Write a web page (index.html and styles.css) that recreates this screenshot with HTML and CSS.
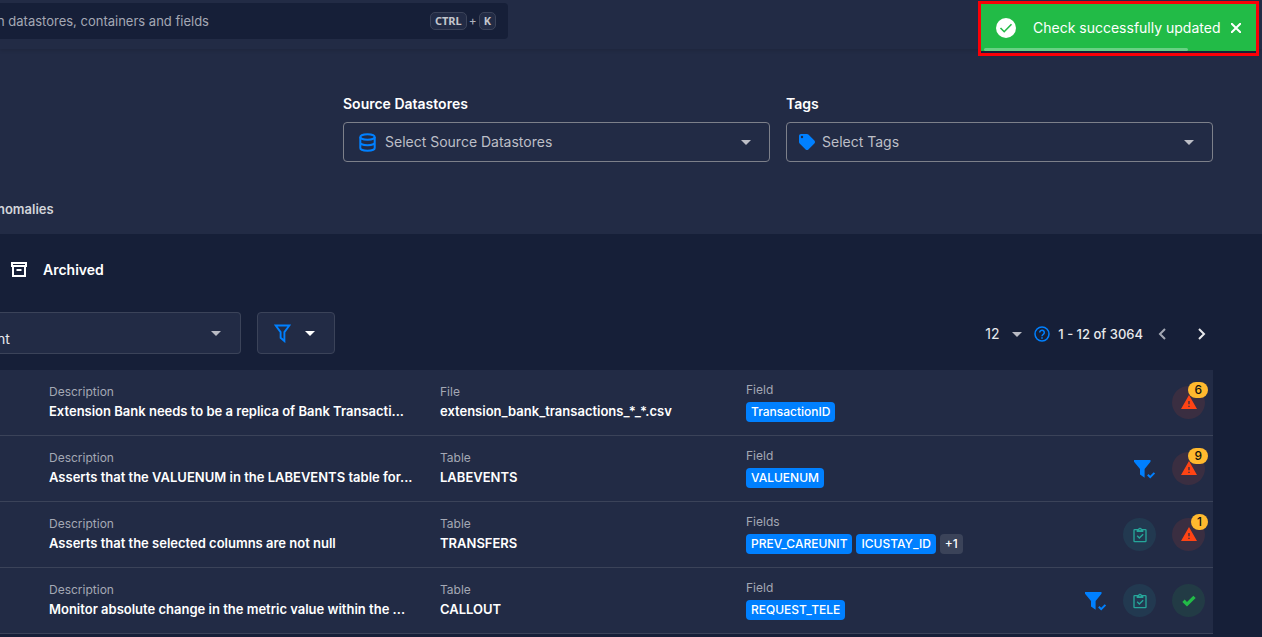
FILE: index.html
```html
<!DOCTYPE html>
<html lang="en">
<head>
  <meta charset="UTF-8">
  <meta name="viewport" content="width=device-width, initial-scale=1.0">
  <title>Checks</title>
  <link rel="stylesheet" href="styles.css">
</head>
<body>
  <!-- shared icons -->
  <svg class="sprite" aria-hidden="true">
    <symbol id="caret" viewBox="0 0 10 5"><path d="M0 0h10L5 5z"/></symbol>
    <symbol id="alert" viewBox="0 0 24 24"><path d="M13 14h-2V9h2m0 9h-2v-2h2M0 21h24L12 0z"/></symbol>
    <symbol id="clipboard" viewBox="0 0 24 24"><path d="M20 3h-5.200a3 3 0 0 0-5.600 0H4a2 2 0 0 0-2 2v16a2 2 0 0 0 2 2h16a2 2 0 0 0 2-2V5a2 2 0 0 0-2-2zm-8 0a1 1 0 1 1 0 2 1 1 0 0 1 0-2zM7 7.500h10V5h3v16H4V5h3zm0 6.500 1.500-1.500 2.500 2.500 5-5 1.500 1.500-6.500 6.500z"/></symbol>
    <symbol id="check" viewBox="0 0 24 24"><path d="M9 20.400 2 13.400l3.500-3.500L9 13.400 18.500 4 22 7.500z"/></symbol>
    <symbol id="filter-check" viewBox="0 0 24 24"><path d="M2 3h16.500v1.800L12.600 12v8.800L8 17.500V12L2 4.800z"/><path d="m15.800 17.700 2.400 2.400 4.200-4.200" fill="none" stroke="currentColor" stroke-width="2"/></symbol>
  </svg>

  <header class="header">
    <div class="topbar">
      <div class="search">
        <input type="text" class="search-input" placeholder="n datastores, containers and fields" aria-label="Search">
        <span class="shortcut"><kbd>CTRL</kbd>+<kbd>K</kbd></span>
      </div>
    </div>

    <div class="filters">
      <div class="field">
        <label for="datastores">Source Datastores</label>
        <div class="select-box">
          <svg class="icon-db" viewBox="0 0 17 19"><g fill="none" stroke="currentColor" stroke-width="2"><ellipse cx="8.500" cy="4" rx="7.200" ry="2.800"/><path d="M1.300 4v11c0 1.600 3.200 2.800 7.200 2.800s7.200-1.200 7.200-2.800V4M1.300 9.500c0 1.600 3.200 2.800 7.200 2.800s7.200-1.200 7.200-2.800"/></g></svg>
          <select id="datastores"><option>Select Source Datastores</option></select>
          <svg class="caret"><use href="#caret"/></svg>
        </div>
      </div>
      <div class="field">
        <label for="tags">Tags</label>
        <div class="select-box select-tags">
          <svg class="icon-tag" viewBox="0 0 16 16"><path fill-rule="evenodd" d="M2 0h6c.5 0 1 .2 1.400.600l6 6c.8.800.8 2 0 2.800l-6 6c-.8.800-2 .8-2.800 0l-6-6C.2 9 0 8.500 0 8V2C0 .9.900 0 2 0zm1 1.800a1.200 1.200 0 1 0 0 2.400 1.200 1.200 0 0 0 0-2.400z"/></svg>
          <select id="tags"><option>Select Tags</option></select>
          <svg class="caret"><use href="#caret"/></svg>
        </div>
      </div>
    </div>

    <nav class="tabs"><a href="#">nomalies</a></nav>
  </header>

  <main>
    <a class="archived" href="#">
      <svg class="icon-archive" viewBox="0 0 16 16"><path fill="none" stroke="currentColor" stroke-width="2" d="M1 1h14v3H1zM2 4v10h12V4M5.500 8h5"/></svg>
      Archived
    </a>

    <div class="toolbar">
      <div class="sort">
        <select aria-label="Sort by"><option>nt</option></select>
        <svg class="caret"><use href="#caret"/></svg>
      </div>
      <button type="button" class="filter-btn" aria-label="Filter">
        <svg class="icon-funnel" viewBox="0 0 18 20"><path fill="none" stroke="currentColor" stroke-width="2" d="M1.800 1.500h14.400L11 8.500v9.500l-4-3.500v-6z"/></svg>
        <svg class="caret"><use href="#caret"/></svg>
      </button>

      <div class="pager">
        <select aria-label="Items per page"><option>12</option></select>
        <svg class="caret"><use href="#caret"/></svg>
        <svg class="icon-help" viewBox="0 0 16 16"><g fill="none" stroke="currentColor" stroke-width="1.500"><circle cx="8" cy="8" r="7"/><path d="M5.700 6.500a2.300 2.300 0 1 1 3.600 1.900C8.400 9 8 9.300 8 10.200M8 11.300v1.500"/></g></svg>
        <span>1 - 12 of 3064</span>
        <button type="button" class="prev" aria-label="Previous page"><svg viewBox="0 0 8 12"><path d="M7 1 2 6l5 5"/></svg></button>
        <button type="button" class="next" aria-label="Next page"><svg viewBox="0 0 8 12"><path d="m1 1 5 5-5 5"/></svg></button>
      </div>
    </div>

    <table class="checks">
      <colgroup><col class="col-desc"><col class="col-table"><col><col class="col-status"></colgroup>
      <tbody>
        <tr>
          <td><small>Description</small><strong>Extension Bank needs to be a replica of Bank Transacti...</strong></td>
          <td><small>File</small><strong>extension_bank_transactions_*_*.csv</strong></td>
          <td><small>Field</small><div class="chips"><span class="chip">TransactionID</span></div></td>
          <td><div class="status">
            <span class="dot dot-red"><svg><use href="#alert"/></svg><b class="badge">6</b></span>
          </div></td>
        </tr>
        <tr>
          <td><small>Description</small><strong>Asserts that the VALUENUM in the LABEVENTS table for...</strong></td>
          <td><small>Table</small><strong>LABEVENTS</strong></td>
          <td><small>Field</small><div class="chips"><span class="chip">VALUENUM</span></div></td>
          <td><div class="status">
            <svg class="icon-filter"><use href="#filter-check"/></svg>
            <span class="dot dot-red"><svg><use href="#alert"/></svg><b class="badge">9</b></span>
          </div></td>
        </tr>
        <tr>
          <td><small>Description</small><strong>Asserts that the selected columns are not null</strong></td>
          <td><small>Table</small><strong>TRANSFERS</strong></td>
          <td><small>Fields</small><div class="chips"><span class="chip">PREV_CAREUNIT</span><span class="chip">ICUSTAY_ID</span><span class="chip chip-more">+1</span></div></td>
          <td><div class="status">
            <span class="dot dot-teal"><svg><use href="#clipboard"/></svg></span>
            <span class="dot dot-red"><svg><use href="#alert"/></svg><b class="badge">1</b></span>
          </div></td>
        </tr>
        <tr>
          <td><small>Description</small><strong>Monitor absolute change in the metric value within the ...</strong></td>
          <td><small>Table</small><strong>CALLOUT</strong></td>
          <td><small>Field</small><div class="chips"><span class="chip">REQUEST_TELE</span></div></td>
          <td><div class="status">
            <svg class="icon-filter"><use href="#filter-check"/></svg>
            <span class="dot dot-teal"><svg><use href="#clipboard"/></svg></span>
            <span class="dot dot-green"><svg><use href="#check"/></svg></span>
          </div></td>
        </tr>
      </tbody>
    </table>
  </main>

  <div class="toast-frame">
    <div class="toast" role="status">
      <svg class="icon-ok" viewBox="0 0 20 20"><circle cx="10" cy="10" r="10" fill="#fff"/><path d="m4.500 10 3.700 3.700 7.300-7.400" fill="none" stroke="#22bb47" stroke-width="1.600"/></svg>
      <span>Check successfully updated</span>
      <button type="button" aria-label="Close"><svg viewBox="0 0 10 10"><path d="m0 0 10 10M10 0 0 10"/></svg></button>
      <div class="toast-progress"></div>
    </div>
  </div>
</body>
</html>
```
FILE: styles.css
```css
* {
  box-sizing: border-box;
}

body {
  margin: 0;
  height: 100vh;
  overflow: hidden;
  background-color: #161f38;
  color: #fff;
  font-family: Inter, "Liberation Sans", sans-serif;
  font-size: 14px;
  line-height: 20px;
}

svg {
  display: block;
  flex: none;
  fill: currentColor;
}

a {
  color: inherit;
  text-decoration: none;
}

button {
  padding: 0;
  border: none;
  background: none;
  color: inherit;
  font: inherit;
  cursor: pointer;
}

select,
input {
  min-width: 0;
  padding: 0;
  border: none;
  outline: none;
  background: none;
  color: inherit;
  font: inherit;
  appearance: none;
}

.sprite {
  position: absolute;
  width: 0;
  height: 0;
}

.caret {
  width: 10px;
  height: 5px;
  pointer-events: none;
}

/* header */
.header {
  height: 234px;
  background-color: #222b45;
}

.topbar {
  height: 49px;
  padding-top: 3px;
  box-shadow: 0 1px 4px rgba(0, 0, 0, 0.15);
}

.search {
  display: flex;
  align-items: center;
  width: 508px;
  height: 36px;
  padding-right: 12px;
  border-radius: 0 4px 4px 0;
  background-color: #161f38;
  color: #b0b3bf;
}

.search-input {
  flex: 1;
  font-size: 13px;
}

/* the page is scrolled sideways, first letters are cut off */
.search-input,
.tabs,
.sort select {
  margin-left: -3px;
}

.search-input::placeholder {
  color: #a4a8b4;
  opacity: 1;
}

.shortcut {
  display: flex;
  align-items: center;
  gap: 2px;
  font-size: 12px;
}

kbd {
  padding: 0 4px;
  border: 1px solid #3b4359;
  border-radius: 5px;
  background-color: #222b45;
  color: #c3c5cc;
  font: bold 11px/16px "Noto Sans", sans-serif;
}

.filters {
  display: grid;
  grid-template-columns: 1fr 1fr;
  gap: 16px;
  padding: 45px 49px 0 343px;
}

.field label {
  display: block;
  margin-bottom: 8px;
  font-weight: 600;
}

.select-box {
  display: flex;
  align-items: center;
  gap: 9px;
  height: 40px;
  padding: 0 18px 0 15px;
  border: 1px solid #7d808a;
  border-radius: 4px;
  color: #bdbfc7;
}

.select-tags {
  gap: 7px;
  padding-left: 12px;
}

.select-box select {
  flex: 1;
}

.icon-db,
.icon-funnel {
  width: 17px;
  height: 19px;
  color: #0080ff;
}

.icon-tag {
  width: 16px;
  height: 16px;
  color: #0080ff;
}

.tabs {
  padding-top: 37px;
  color: #d3d5da;
  font-weight: 600;
  font-size: 13px;
}

/* list */
.archived {
  display: flex;
  align-items: center;
  gap: 16px;
  padding: 26px 0 0 11px;
  font-weight: 600;
}

.icon-archive {
  width: 16px;
  height: 16px;
}

.toolbar {
  display: flex;
  align-items: center;
  gap: 16px;
  padding: 32px 49px 16px 0;
}

.sort {
  display: flex;
  align-items: center;
  width: 241px;
  height: 42px;
  padding-right: 19px;
  border: 1px solid #3b4359;
  border-left: none;
  border-radius: 0 4px 4px 0;
  background-color: #222b45;
  color: #b9bbc4;
}

.sort select {
  flex: 1;
  padding-top: 12px;
  color: #e8e9ec;
}

.filter-btn {
  display: flex;
  align-items: center;
  gap: 14px;
  width: 78px;
  height: 42px;
  padding-left: 16px;
  border: 1px solid #3b4359;
  border-radius: 4px;
  background-color: #222b45;
}

.pager {
  display: flex;
  align-items: center;
  gap: 12px;
  margin-left: auto;
  padding: 2px 7px 0 0;
  color: #e8e9ec;
}

.pager .caret {
  color: #b9bbc4;
}

.icon-help {
  width: 16px;
  height: 16px;
  color: #0080ff;
}

.pager span {
  margin-left: -4px;
  font-weight: 500;
  font-size: 13px;
}

.pager button svg {
  width: 8px;
  height: 12px;
  fill: none;
  stroke: currentColor;
  stroke-width: 2;
}

.prev {
  margin-left: 3px;
  color: #a4a8b4;
}

.next {
  margin-left: 20px;
}

.checks {
  width: calc(100% - 49px);
  border-spacing: 0;
  table-layout: fixed;
  background-color: #222b45;
}

.col-desc {
  width: 440px;
}

.col-table {
  width: 306px;
}

.col-status {
  width: 140px;
}

.checks td {
  height: 66px;
  padding: 0 0 2px;
  border-bottom: 1px solid #3b4359;
  white-space: nowrap;
}

.checks td:first-child {
  padding-left: 49px;
}

.checks td:last-child {
  padding: 0 8px 0 0;
}

small {
  display: block;
  color: #a4a8b4;
  font-size: 12px;
  line-height: 18px;
}

strong {
  display: block;
  font-weight: 600;
  font-size: 13px;
}

.chips {
  display: flex;
  gap: 4px;
  margin-top: 3px;
}

.chip {
  padding: 0 5px;
  border-radius: 4px;
  background-color: #0080ff;
  font-weight: 500;
  font-size: 12px;
}

.chip-more {
  background-color: #3b4359;
}

.status {
  display: flex;
  align-items: center;
  justify-content: flex-end;
  gap: 16px;
}

.icon-filter {
  width: 24px;
  height: 24px;
  color: #0080ff;
}

.dot {
  position: relative;
  display: flex;
  align-items: center;
  justify-content: center;
  width: 33px;
  height: 33px;
  border-radius: 50%;
}

.dot svg {
  width: 16px;
  height: 16px;
}

.dot-red {
  background-color: #3a2e41;
  color: #ff4414;
}

.dot-teal {
  background-color: #223950;
  color: #26a69a;
}

.dot-green {
  background-color: #223b45;
  color: #22bb47;
}

.badge {
  position: absolute;
  top: -4px;
  right: -3px;
  min-width: 16px;
  padding: 0 6px;
  border-radius: 8px;
  background-color: #ffb92e;
  color: #111;
  font-weight: 500;
  font-size: 12px;
  line-height: 16px;
}

/* toast */
.toast-frame {
  position: absolute;
  top: 1px;
  right: 3px;
  padding-bottom: 2px;
  border: 3px solid #fb0007;
  background-color: #161f38;
}

.toast {
  position: relative;
  display: flex;
  align-items: center;
  width: 275px;
  height: 47px;
  padding: 0 15px;
  background-color: #22bb47;
}

.toast span {
  flex: 1;
  margin-left: 17px;
  white-space: nowrap;
}

.icon-ok {
  width: 20px;
  height: 20px;
}

.toast button svg {
  width: 10px;
  height: 10px;
  stroke: #fff;
  stroke-width: 2;
}

.toast-progress {
  position: absolute;
  bottom: 0;
  left: 3px;
  width: 204px;
  height: 3px;
  border-radius: 2px;
  background-color: #69d183;
}
```
